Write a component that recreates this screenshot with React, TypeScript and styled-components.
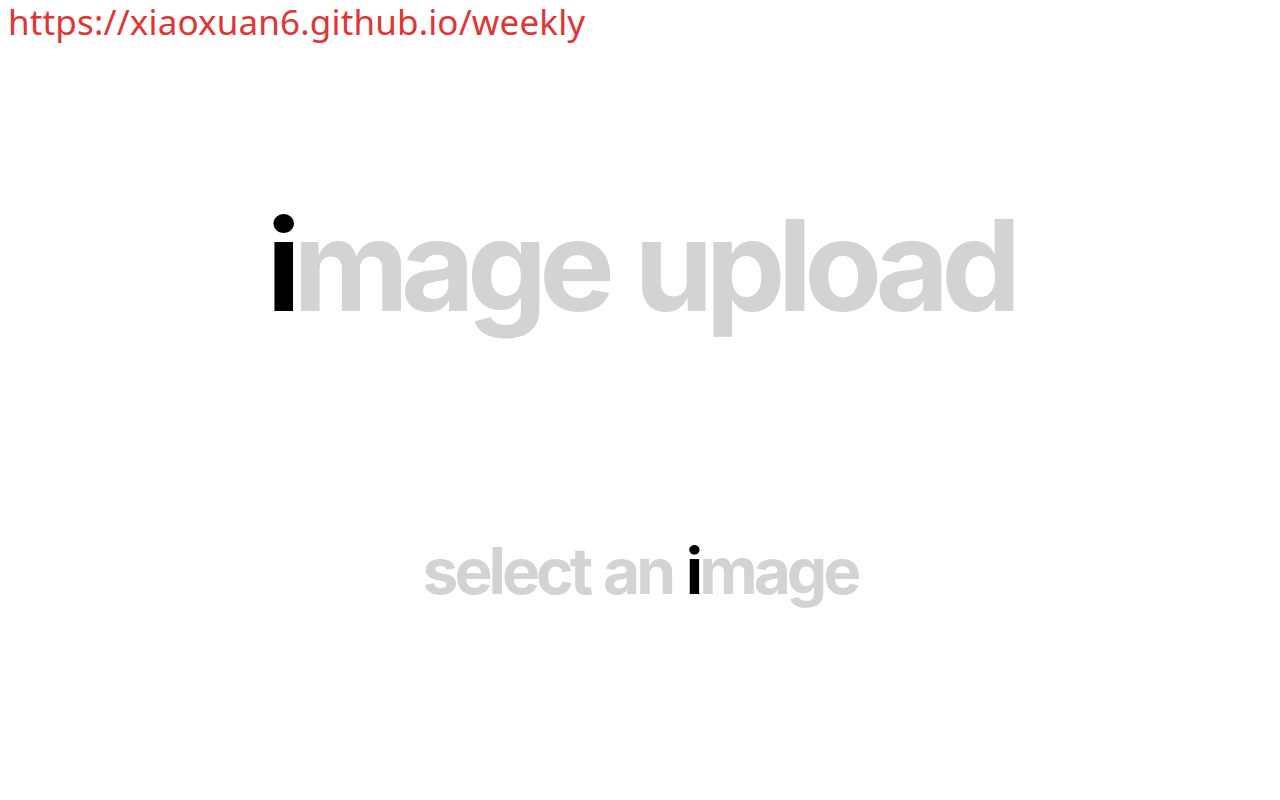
import React from "react";
import styled, { createGlobalStyle } from "styled-components";

const Global = createGlobalStyle`
  html, body { margin: 0; padding: 0; background: #fff; }
  body { font-family: Inter, "Noto Sans", sans-serif; }
`;

const Page = styled.div`
  width: 1280px;
  height: 800px;
  display: flex;
  flex-direction: column;
  align-items: center;
  overflow: hidden;
`;

const Link = styled.a`
  align-self: flex-start;
  margin: -2px 0 0 8px;
  font-family: "Noto Sans", sans-serif;
  font-size: 35px;
  line-height: normal;
  letter-spacing: 0.15px;
  color: #e03535;
  text-decoration: none;
  white-space: nowrap;
`;

const Title = styled.h1<{ $size: number; $top: number }>`
  margin: ${(p) => p.$top}px 0 0 0;
  font-family: Inter, sans-serif;
  font-weight: 700;
  font-size: ${(p) => p.$size}px;
  line-height: 1;
  letter-spacing: -0.062em;
  word-spacing: 0.04em;
  color: #d3d3d3;
  white-space: nowrap;
`;

const Accent = styled.span`
  color: #000;
`;

export default function App() {
  return (
    <>
      <Global />
      <Page>
        <Link href="https://xiaoxuan6.github.io/weekly">https://xiaoxuan6.github.io/weekly</Link>
        <Title $size={127} $top={157}>
          <Accent>i</Accent>mage upload
        </Title>
        <Title $size={64} $top={210}>
          select an <Accent>i</Accent>mage
        </Title>
      </Page>
    </>
  );
}
